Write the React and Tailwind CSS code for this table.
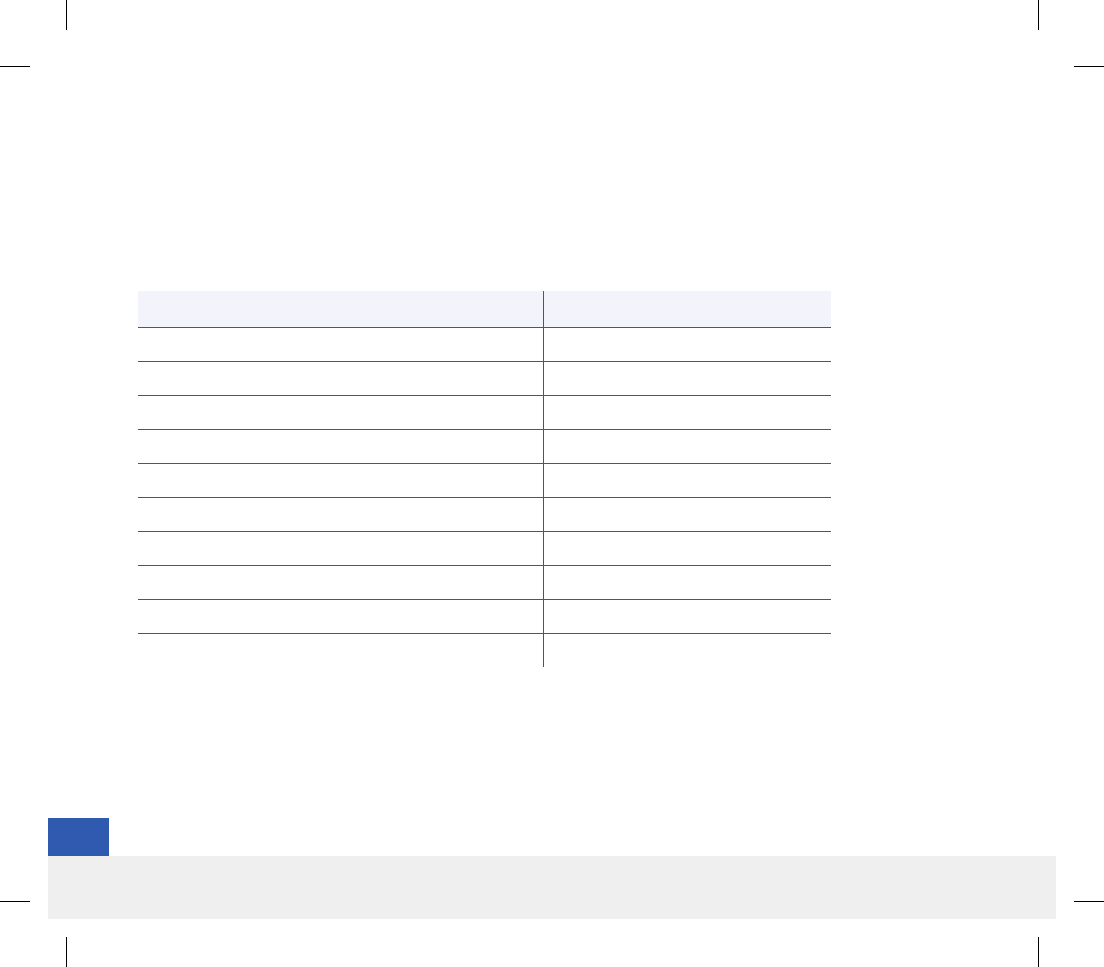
export default function App() {
  const rows = Array.from({ length: 10 });
  return (
    <div className="relative w-[1104px] h-[967px] bg-white overflow-hidden" style={{ fontFamily: '"Liberation Sans", sans-serif' }}>
      {/* crop marks */}
      <div className="absolute left-[66px] top-0 w-px h-[30px] bg-black" />
      <div className="absolute left-0 top-[66px] w-[30px] h-px bg-black" />
      <div className="absolute left-[1038px] top-0 w-px h-[30px] bg-black" />
      <div className="absolute left-[1074px] top-[66px] w-[30px] h-px bg-black" />
      <div className="absolute left-0 top-[901px] w-[30px] h-px bg-black" />
      <div className="absolute left-[66px] top-[937px] w-px h-[30px] bg-black" />
      <div className="absolute left-[1074px] top-[901px] w-[30px] h-px bg-black" />
      <div className="absolute left-[1038px] top-[937px] w-px h-[30px] bg-black" />

      <div className="flex flex-col pt-[291px]">
        <div className="ml-[138px] w-[693px] flex flex-col">
          <div className="flex h-[37px] bg-[#f2f3fb] border-b border-[#3157a8]">
            <div className="w-[406px] border-r border-[#3157a8]" />
            <div className="flex-1" />
          </div>
          {rows.map((_, i) => (
            <div
              key={i}
              className={i < rows.length - 1 ? 'flex h-[34px] border-b border-[#3157a8]' : 'flex h-[33px]'}
            >
              <div className="w-[406px] border-r border-[#3157a8]" />
              <div className="flex-1" />
            </div>
          ))}
        </div>

        <div className="mt-[151px] ml-[48px] w-[1008px] flex flex-col">
          <div className="w-[61px] h-[38px] bg-[#3059b0]" />
          <div className="h-[63px] bg-[#efefef]" />
        </div>
      </div>
    </div>
  );
}
